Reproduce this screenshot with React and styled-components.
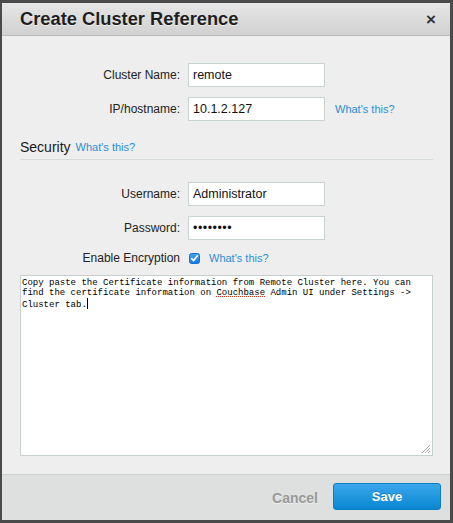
import React from 'react';
import styled, { createGlobalStyle } from 'styled-components';

const GlobalStyle = createGlobalStyle`
  html, body {
    margin: 0;
    padding: 0;
    background: #4a4a4a;
  }
  body {
    padding: 3px 3px 3px 2px;
    font-family: "Liberation Sans", Arial, sans-serif;
  }
`;

const Dialog = styled.div`
  width: 448px;
  background: #eeeeee;
  display: flex;
  flex-direction: column;
`;

const Header = styled.div`
  height: 32px;
  display: flex;
  align-items: center;
  justify-content: space-between;
  padding: 0 14px 0 18px;
  background: linear-gradient(#e6e6e6, #d1d1d1);
  border-bottom: 1px solid #b9b9b9;
  border-radius: 2px 2px 0 0;
`;

const Title = styled.h1`
  margin: 0;
  font-size: 18.3px;
  font-weight: bold;
  color: #1e1e1e;
  text-shadow: 0 1px 0 rgba(255, 255, 255, 0.6);
`;

const Close = styled.span`
  font-size: 17px;
  font-weight: bold;
  color: #333;
  line-height: 1;
`;

const Body = styled.div`
  padding: 27px 17px 18px 18px;
  display: flex;
  flex-direction: column;
`;

const FieldGrid = styled.div`
  display: grid;
  grid-template-columns: 160px 137px auto;
  column-gap: 8px;
  row-gap: 10px;
  margin-top: ${({ $top }) => $top || 0}px;
`;

const Label = styled.label`
  font-size: 12px;
  color: #222;
  text-align: right;
  align-self: center;
`;

const Input = styled.div`
  height: 24px;
  box-sizing: border-box;
  border: 1px solid #cbd2d2;
  background: #fff;
  padding: 0 4px;
  display: flex;
  align-items: center;
  font-size: 12.5px;
  color: #111;
  letter-spacing: ${({ $dots }) => ($dots ? '0.5px' : '0')};
`;

const Link = styled.a`
  font-size: 11px;
  color: #2a8fd6;
  text-decoration: none;
  align-self: center;
  margin-left: ${({ $left }) => $left || 0}px;
`;

const InlineCell = styled.div`
  display: flex;
  align-items: center;
  gap: 9px;
  height: 16px;
  padding-left: 1px;
  grid-column: 2 / 4;
`;

const SectionHead = styled.div`
  margin-top: 18px;
  padding-bottom: 4px;
  border-bottom: 1px solid #d6dcdc;
  display: flex;
  align-items: baseline;
  gap: 5px;
  line-height: 16px;
`;

const SectionTitle = styled.span`
  font-size: 14px;
  color: #1a1a1a;
`;

const TextBox = styled.div`
  position: relative;
  margin-top: 9px;
  height: 181px;
  box-sizing: border-box;
  border: 1px solid #c8cfcf;
  background: #fff;
  padding: 2px 1px;
  font-family: "Liberation Mono", "Courier New", monospace;
  font-size: 9px;
  line-height: 10px;
  color: #000;
`;

const Line = styled.div`
  height: 10px;
  white-space: pre;
`;

const Misspelled = styled.span`
  text-decoration: underline dotted #e0301e;
  text-decoration-thickness: 1px;
  text-underline-offset: 1px;
`;

const Caret = styled.span`
  display: inline-block;
  width: 1px;
  height: 11px;
  background: #000;
  vertical-align: -2px;
`;

const Grip = styled.svg`
  position: absolute;
  right: 1px;
  bottom: 1px;
`;

const Footer = styled.div`
  height: 45px;
  border-top: 1px solid #cdd2d1;
  background: #dde0df;
  display: flex;
  align-items: center;
  justify-content: flex-end;
  gap: 15px;
  padding-right: 9px;
`;

const CancelButton = styled.button`
  border: 0;
  background: none;
  padding: 0;
  font-family: inherit;
  font-size: 14px;
  font-weight: bold;
  color: #999;
  text-shadow: 0 1px 0 rgba(255, 255, 255, 0.5);
`;

const SaveButton = styled.button`
  width: 108px;
  height: 27px;
  margin-top: -2px;
  border: 1px solid #0b7fc3;
  border-radius: 3px;
  background: linear-gradient(#3aa7ec, #0a87d1);
  color: #fff;
  font-family: inherit;
  font-size: 13px;
  font-weight: bold;
  text-shadow: 0 -1px 0 rgba(0, 0, 0, 0.2);
`;

const Check = () => (
  <svg width="11" height="11" viewBox="0 0 11 11">
    <defs>
      <linearGradient id="cb" x1="0" y1="0" x2="0" y2="1">
        <stop offset="0" stopColor="#4aa3f5" />
        <stop offset="1" stopColor="#1676e0" />
      </linearGradient>
    </defs>
    <rect x="0.5" y="0.5" width="10" height="10" rx="2" fill="url(#cb)" stroke="#1a6fcc" />
    <path d="M2.6 5.6 L4.6 7.6 L8.4 2.8" fill="none" stroke="#fff" strokeWidth="1.6" strokeLinecap="round" strokeLinejoin="round" />
  </svg>
);

export default function App() {
  return (
    <>
      <GlobalStyle />
      <Dialog>
        <Header>
          <Title>Create Cluster Reference</Title>
          <Close>×</Close>
        </Header>
        <Body>
          <FieldGrid>
            <Label>Cluster Name:</Label>
            <Input>remote</Input>
            <span />
            <Label>IP/hostname:</Label>
            <Input>10.1.2.127</Input>
            <Link href="#" $left={2}>What's this?</Link>
          </FieldGrid>
          <SectionHead>
            <SectionTitle>Security</SectionTitle>
            <Link href="#">What's this?</Link>
          </SectionHead>
          <FieldGrid $top={22}>
            <Label>Username:</Label>
            <Input>Administrator</Input>
            <span />
            <Label>Password:</Label>
            <Input $dots>••••••••</Input>
            <span />
            <Label>Enable Encryption</Label>
            <InlineCell>
              <Check />
              <Link href="#">What's this?</Link>
            </InlineCell>
          </FieldGrid>
          <TextBox>
            <Line>Copy paste the Certificate information from Remote Cluster here. You can</Line>
            <Line>
              <span>find the certificate information on </span>
              <Misspelled>Couchbase</Misspelled>
              <span> Admin UI under Settings -&gt;</span>
            </Line>
            <Line>
              Cluster tab.<Caret />
            </Line>
            <Grip width="12" height="12" viewBox="0 0 12 12">
              <path d="M11 3 L3 11 M11 6 L6 11 M11 9 L9 11" stroke="#a9a9a9" strokeWidth="1" />
            </Grip>
          </TextBox>
        </Body>
        <Footer>
          <CancelButton>Cancel</CancelButton>
          <SaveButton>Save</SaveButton>
        </Footer>
      </Dialog>
    </>
  );
}
